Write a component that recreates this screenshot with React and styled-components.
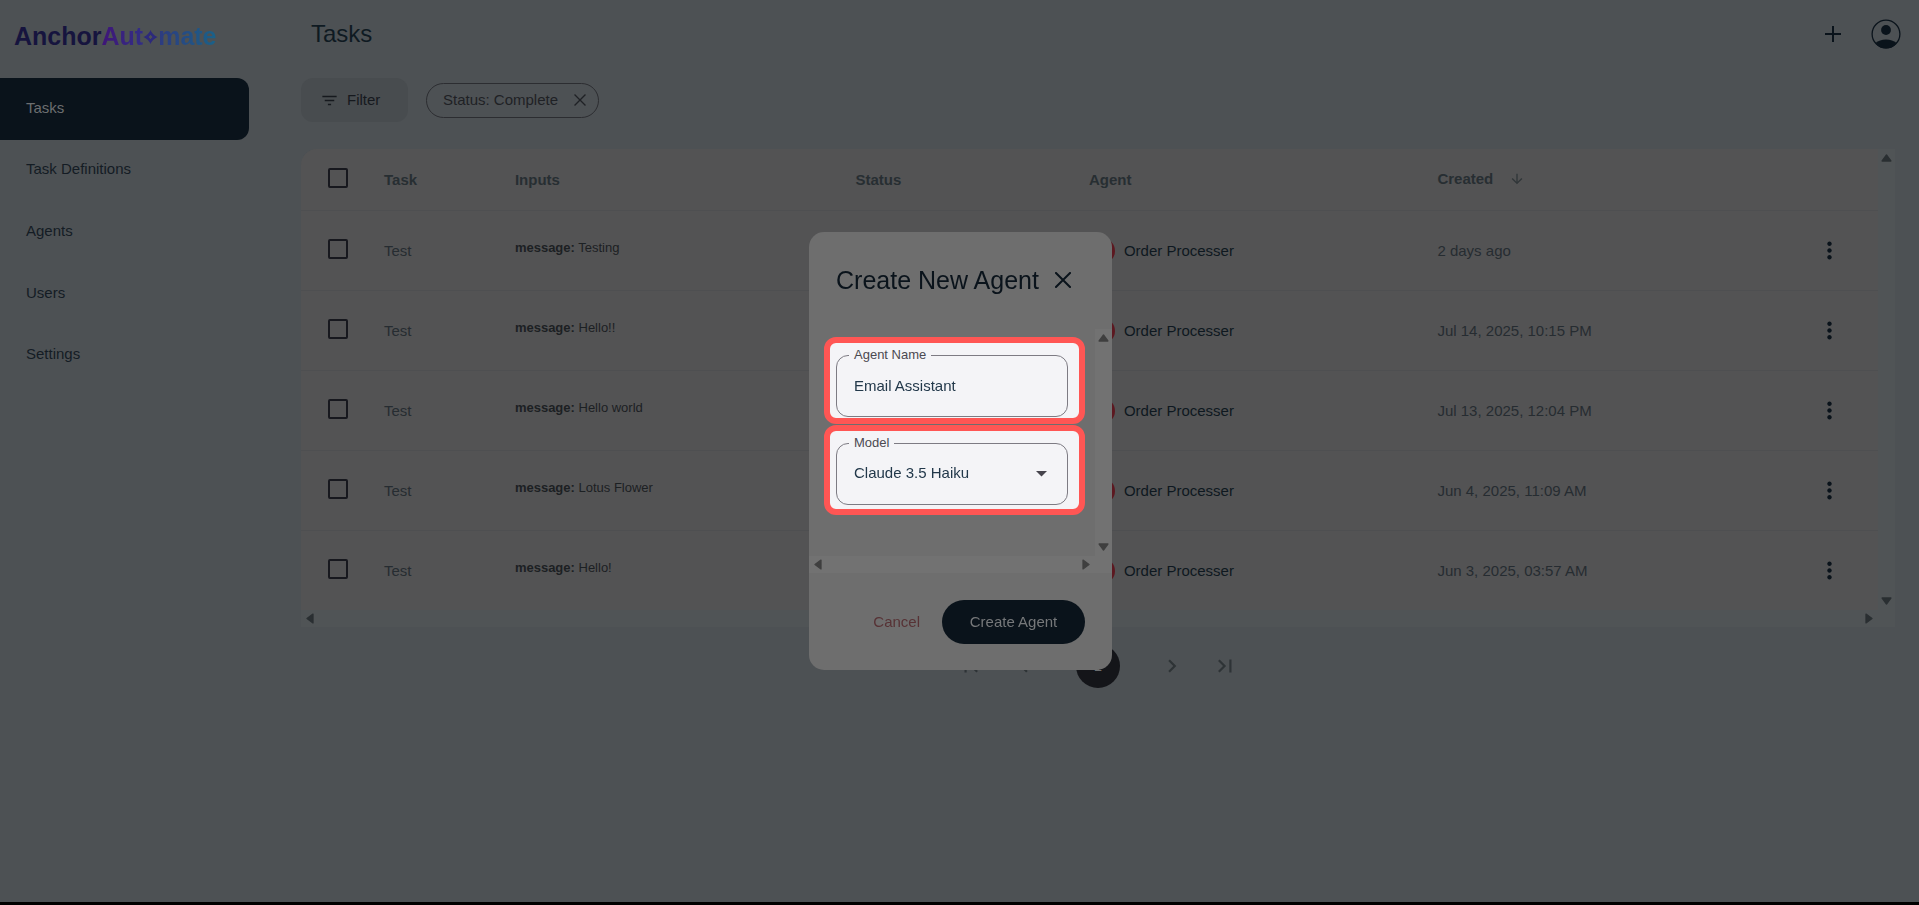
import React from "react";
import styled, { createGlobalStyle } from "styled-components";
import {
  MdArrowDownward,
  MdChevronLeft,
  MdChevronRight,
  MdFilterList,
  MdFirstPage,
  MdLastPage,
  MdMoreVert,
} from "react-icons/md";

const color = {
  page: "#4d5154",
  card: "#535354",
  track: "#505456",
  line: "#4e4f51",
  navy: "#0a131b",
  ink: "#16191e",
  text: "#262c31",
  heading: "#272e32",
  dialog: "#6e6e6e",
  dialogTrack: "#727272",
  highlight: "#ff5654",
  field: "#f4f4f7",
};

const GlobalStyle = createGlobalStyle`
  *, *::before, *::after { box-sizing: border-box; }
  body {
    margin: 0;
    background: ${color.page};
    color: ${color.text};
    font-family: "Liberation Sans", Arial, sans-serif;
    font-size: 15px;
    line-height: 20px;
  }
  button, input, select { font: inherit; color: inherit; }
  button { border: 0; padding: 0; background: none; cursor: pointer; }
  svg { display: block; flex: none; }
`;

const Shell = styled.div`
  display: flex;
  min-height: 100vh;
  border-bottom: 3px solid #000;
`;

const Sidebar = styled.aside`
  flex: none;
  width: 249px;
`;

const Logo = styled.a`
  display: flex;
  align-items: center;
  height: 78px;
  padding: 0 0 6px 14px;
  font-size: 25px;
  line-height: 30px;
  font-weight: 700;
  text-decoration: none;
  color: #16143e;
`;

const LogoPart = styled.span`
  background: linear-gradient(90deg, ${(p) => p.$from}, ${(p) => p.$to});
  background-clip: text;
  -webkit-background-clip: text;
  color: transparent;
`;

const NavList = styled.nav`
  display: flex;
  flex-direction: column;
  height: 308px;
`;

const NavLink = styled.a`
  flex: 1;
  display: flex;
  align-items: center;
  padding: 0 0 2px 26px;
  border-radius: 0 12px 12px 0;
  text-decoration: none;
  color: ${(p) => (p.$active ? "#6c6e70" : "#141c24")};
  background: ${(p) => (p.$active ? color.navy : "transparent")};
`;

const Main = styled.main`
  flex: 1;
  min-width: 0;
  padding: 0 24px 0 52px;
`;

const TopBar = styled.header`
  display: flex;
  align-items: center;
  height: 78px;
  margin-right: -6px;
  padding: 0 0 10px 10px;
`;

const PageTitle = styled.h1`
  flex: 1;
  margin: 0;
  font-size: 24px;
  line-height: 32px;
  font-weight: 400;
  color: #0f1a22;
`;

const TopActions = styled.div`
  display: flex;
  align-items: center;
  gap: 30px;
  color: ${color.navy};
`;

const IconButton = styled.button`
  display: flex;
  align-items: center;
  justify-content: center;
`;

const FilterBar = styled.div`
  display: flex;
  align-items: center;
  gap: 18px;
  margin-bottom: 27px;
`;

const FilterButton = styled.button`
  display: flex;
  align-items: center;
  gap: 8px;
  height: 44px;
  width: 107px;
  padding-left: 19px;
  border-radius: 12px;
  background: #484c4f;
  color: ${color.ink};
`;

const Chip = styled.span`
  display: flex;
  align-items: center;
  justify-content: space-between;
  height: 35px;
  width: 173px;
  padding: 0 12px 0 16px;
  border: 1px solid #2c2d31;
  border-radius: 18px;
  color: #1f2125;
`;

const TableCard = styled.section`
  display: grid;
  grid-template-columns: 1fr 17px;
  grid-template-rows: auto 17px;
  overflow: hidden;
  border-radius: 16px 0 0 0;
  background: ${color.track};
  color: #2a2f32;
`;

const Table = styled.table`
  width: 100%;
  table-layout: fixed;
  border-collapse: separate;
  border-spacing: 0;
  background: ${color.card};
`;

const Col = styled.col`
  width: ${(p) => p.$width};
`;

const HeadCell = styled.th`
  height: 62px;
  padding: 0 16px;
  border-bottom: 1px solid ${color.line};
  text-align: left;
  font-weight: 700;
  color: ${color.heading};
`;

const Cell = styled.td`
  height: ${(p) => (p.$last ? "79px" : "80px")};
  padding: 0 16px;
  border-bottom: ${(p) => (p.$last ? "0" : `1px solid ${color.line}`)};
  color: ${(p) => p.$tone || color.text};
`;

const Checkbox = styled.input`
  appearance: none;
  display: block;
  width: 20px;
  height: 20px;
  margin: 0 0 4px 11px;
  border: 2px solid #17181e;
  border-radius: 2px;
`;

const InputNote = styled.div`
  padding-bottom: 6px;
  font-size: 13px;
  color: #1c2023;
`;

const SortButton = styled.button`
  display: flex;
  align-items: center;
  gap: 16px;
  padding-bottom: 2px;
  font-weight: 700;
`;

const AgentName = styled.div`
  display: flex;
  align-items: center;
  gap: 9px;
`;

const Avatar = styled.span`
  width: 26px;
  height: 26px;
  border: 3px solid #5c1820;
  border-radius: 50%;
`;

const Track = styled.div`
  display: flex;
  flex-direction: ${(p) => (p.$vertical ? "column" : "row")};
  justify-content: space-between;
  align-items: center;
  padding: ${(p) => (p.$vertical ? "5px 0" : "0 5px")};
  background: ${(p) => p.$bg};
  color: ${(p) => p.$fg};
`;

const Pagination = styled.nav`
  display: flex;
  justify-content: center;
  align-items: center;
  gap: 27px;
  margin-top: 17px;
  color: #2e3336;
`;

const PageButton = styled(IconButton)`
  width: 26px;
  height: 26px;
`;

const CurrentPage = styled.button`
  width: 44px;
  height: 44px;
  margin: 0 12px;
  border-radius: 50%;
  background: #141519;
  color: #6c6e70;
`;

const Overlay = styled.div`
  position: fixed;
  inset: 0;
  display: flex;
  align-items: center;
  justify-content: center;
  padding: 0 0 3px 2px;
`;

const Dialog = styled.section`
  width: 303px;
  border-radius: 15px;
  overflow: hidden;
  background: ${color.dialog};
`;

const DialogHeader = styled.header`
  display: flex;
  align-items: center;
  justify-content: space-between;
  height: 97px;
  padding: 0 41px 2px 27px;
  color: ${color.navy};
`;

const DialogTitle = styled.h2`
  margin: 0;
  font-size: 25px;
  line-height: 32px;
  font-weight: 400;
  white-space: nowrap;
`;

const DialogBody = styled.div`
  display: grid;
  grid-template-columns: 1fr 17px;
  grid-template-rows: 227px 17px;
  background: ${color.dialogTrack};
`;

const Fields = styled.div`
  display: flex;
  flex-direction: column;
  gap: 1px;
  padding: 8px 10px 0 15px;
  background: ${color.dialog};
`;

const Highlight = styled.div`
  padding: 12px 11px ${(p) => p.$bottom} 6px;
  border: 6px solid ${color.highlight};
  border-radius: 12px;
  background: ${color.field};
`;

const Field = styled.div`
  position: relative;
  display: flex;
  align-items: center;
  height: 62px;
  border: 1px solid #7d7b83;
  border-radius: 12px;
  color: #22384a;
`;

const FieldLabel = styled.label`
  position: absolute;
  top: -11px;
  left: 12px;
  padding: 0 5px;
  font-size: 13px;
  background: ${color.field};
  color: #4b4951;
`;

const TextInput = styled.input`
  width: 100%;
  height: 100%;
  padding: 0 17px 2px;
  border: 0;
  outline: 0;
  background: none;
`;

const Select = styled.select`
  appearance: none;
  width: 100%;
  height: 100%;
  padding: 0 17px 2px;
  border: 0;
  outline: 0;
  background: none;
`;

const SelectArrow = styled.svg`
  position: absolute;
  right: 20px;
  color: #46444d;
  pointer-events: none;
`;

const DialogFooter = styled.footer`
  display: flex;
  align-items: center;
  justify-content: flex-end;
  gap: 22px;
  padding: 27px 27px 26px;
`;

const CancelButton = styled.button`
  height: 44px;
  color: #573235;
`;

const SubmitButton = styled.button`
  width: 143px;
  height: 44px;
  border-radius: 22px;
  background: ${color.navy};
  color: #76787a;
`;

const rotation = { up: 0, right: 90, down: 180, left: 270 };

function ScrollArrow({ dir }) {
  const sideways = dir === "left" || dir === "right";
  return (
    <svg width={sideways ? 8 : 11} height={sideways ? 11 : 8} viewBox={sideways ? "-4 -5.5 8 11" : "-5.5 -4 11 8"} aria-hidden="true">
      <path
        transform={`rotate(${rotation[dir]})`}
        d="M0-3L4.400 3H-4.400Z"
        fill="currentColor"
        stroke="currentColor"
        strokeWidth="1.300"
        strokeLinejoin="round"
      />
    </svg>
  );
}

function PlusIcon() {
  return (
    <svg width="16" height="16" viewBox="0 0 16 16" aria-hidden="true">
      <path d="M8 0V16M0 8H16" stroke="currentColor" strokeWidth="2" />
    </svg>
  );
}

function CrossIcon({ size, weight }) {
  return (
    <svg width={size} height={size} viewBox={`0 0 ${size} ${size}`} aria-hidden="true">
      <path
        d={`M1 1L${size - 1} ${size - 1}M${size - 1} 1L1 ${size - 1}`}
        stroke="currentColor"
        strokeWidth={weight}
        strokeLinecap="square"
      />
    </svg>
  );
}

function AccountIcon() {
  return (
    <svg width="30" height="30" viewBox="0 0 30 30" aria-hidden="true">
      <clipPath id="account-ring"><circle cx="15" cy="15" r="14.5" /></clipPath>
      <circle cx="15" cy="15" r="13.9" fill="none" stroke="currentColor" strokeWidth="1.3" />
      <circle cx="15" cy="11" r="4.9" fill="currentColor" />
      <path d="M4.5 24Q8.500 20.500 15 20.500T25.500 24L22 30H8Z" fill="currentColor" clipPath="url(#account-ring)" />
    </svg>
  );
}

function LogoStar() {
  return (
    <svg width="15" height="16" viewBox="0 0 15 16" aria-hidden="true">
      <path
        fillRule="evenodd"
        fill="#2d2a7c"
        d="M7.500 2Q9 6.500 14.500 9Q9 11.500 7.500 16Q6 11.500 .5 9Q6 6.500 7.500 2ZM7.500 6.600L5.100 9L7.500 11.400L9.900 9Z"
      />
      <path d="M7.500 5.400L11.100 9L7.500 12.600L3.900 9Z" fill="none" stroke="#2d2a7c" strokeWidth="2" />
    </svg>
  );
}

const navItems = ["Tasks", "Task Definitions", "Agents", "Users", "Settings"];

const rows = [
  { message: "Testing", created: "2 days ago" },
  { message: "Hello!!", created: "Jul 14, 2025, 10:15 PM" },
  { message: "Hello world", created: "Jul 13, 2025, 12:04 PM" },
  { message: "Lotus Flower", created: "Jun 4, 2025, 11:09 AM" },
  { message: "Hello!", created: "Jun 3, 2025, 03:57 AM" },
];

function TaskTable() {
  return (
    <TableCard>
      <Table>
        <colgroup>
          <Col $width="67px" />
          <Col $width="8.3%" />
          <Col $width="21.6%" />
          <Col $width="14.8%" />
          <Col $width="22.1%" />
          <Col />
          <Col $width="78px" />
        </colgroup>
        <thead>
          <tr>
            <HeadCell as="td">
              <Checkbox type="checkbox" aria-label="Select all tasks" />
            </HeadCell>
            <HeadCell>Task</HeadCell>
            <HeadCell>Inputs</HeadCell>
            <HeadCell>Status</HeadCell>
            <HeadCell>Agent</HeadCell>
            <HeadCell>
              <SortButton type="button">
                Created <MdArrowDownward size={16} color="#303639" />
              </SortButton>
            </HeadCell>
            <HeadCell as="td" />
          </tr>
        </thead>
        <tbody>
          {rows.map((row, i) => {
            const last = i === rows.length - 1;
            return (
              <tr key={row.created}>
                <Cell $last={last}>
                  <Checkbox type="checkbox" aria-label={`Select task ${i + 1}`} />
                </Cell>
                <Cell $last={last}>Test</Cell>
                <Cell $last={last}>
                  <InputNote>
                    <b>message:</b> {row.message}
                  </InputNote>
                </Cell>
                <Cell $last={last} />
                <Cell $last={last} $tone="#0e1820">
                  <AgentName>
                    <Avatar />
                    Order Processer
                  </AgentName>
                </Cell>
                <Cell $last={last}>{row.created}</Cell>
                <Cell $last={last} $tone={color.navy}>
                  <IconButton type="button" aria-label="Task actions">
                    <MdMoreVert size={27} />
                  </IconButton>
                </Cell>
              </tr>
            );
          })}
        </tbody>
      </Table>
      <Track $vertical $bg={color.track} $fg="#2a2f32">
        <ScrollArrow dir="up" />
        <ScrollArrow dir="down" />
      </Track>
      <Track $bg={color.track} $fg="#2a2f32">
        <ScrollArrow dir="left" />
        <ScrollArrow dir="right" />
      </Track>
    </TableCard>
  );
}

function CreateAgentDialog() {
  return (
    <Overlay>
      <Dialog role="dialog" aria-modal="true" aria-labelledby="dialog-title">
        <DialogHeader>
          <DialogTitle id="dialog-title">Create New Agent</DialogTitle>
          <IconButton type="button" aria-label="Close">
            <CrossIcon size={16} weight={2} />
          </IconButton>
        </DialogHeader>
        <DialogBody>
          <Fields>
            <Highlight $bottom="1px">
              <Field>
                <FieldLabel htmlFor="agent-name">Agent Name</FieldLabel>
                <TextInput id="agent-name" type="text" defaultValue="Email Assistant" />
              </Field>
            </Highlight>
            <Highlight $bottom="4px">
              <Field>
                <FieldLabel htmlFor="agent-model">Model</FieldLabel>
                <Select id="agent-model" defaultValue="haiku">
                  <option value="haiku">Claude 3.5 Haiku</option>
                </Select>
                <SelectArrow width="11" height="6" viewBox="0 0 11 6" aria-hidden="true">
                  <path d="M0 0H11L5.500 5.500Z" fill="currentColor" />
                </SelectArrow>
              </Field>
            </Highlight>
          </Fields>
          <Track $vertical $bg={color.dialogTrack} $fg="#3f3f3f">
            <ScrollArrow dir="up" />
            <ScrollArrow dir="down" />
          </Track>
          <Track $bg={color.dialogTrack} $fg="#3f3f3f">
            <ScrollArrow dir="left" />
            <ScrollArrow dir="right" />
          </Track>
        </DialogBody>
        <DialogFooter>
          <CancelButton type="button">Cancel</CancelButton>
          <SubmitButton type="button">Create Agent</SubmitButton>
        </DialogFooter>
      </Dialog>
    </Overlay>
  );
}

export default function App() {
  return (
    <>
      <GlobalStyle />
      <Shell>
        <Sidebar>
          <Logo href="#" aria-label="AnchorAutomate">
            <span>Anchor</span>
            <LogoPart $from="#3f1577" $to="#322e86">Aut</LogoPart>
            <LogoStar />
            <LogoPart $from="#2e3a80" $to="#1a6288">mate</LogoPart>
          </Logo>
          <NavList>
            {navItems.map((item, i) => (
              <NavLink key={item} href="#" $active={i === 0}>
                {item}
              </NavLink>
            ))}
          </NavList>
        </Sidebar>
        <Main>
          <TopBar>
            <PageTitle>Tasks</PageTitle>
            <TopActions>
              <IconButton type="button" aria-label="Add">
                <PlusIcon />
              </IconButton>
              <IconButton type="button" aria-label="Account">
                <AccountIcon />
              </IconButton>
            </TopActions>
          </TopBar>
          <FilterBar>
            <FilterButton type="button">
              <MdFilterList size={19} />
              Filter
            </FilterButton>
            <Chip>
              Status: Complete
              <IconButton type="button" aria-label="Remove filter">
                <CrossIcon size={12} weight={1.3} />
              </IconButton>
            </Chip>
          </FilterBar>
          <TaskTable />
          <Pagination aria-label="Pages">
            <PageButton type="button" aria-label="First page"><MdFirstPage size={26} /></PageButton>
            <PageButton type="button" aria-label="Previous page"><MdChevronLeft size={26} /></PageButton>
            <CurrentPage type="button">1</CurrentPage>
            <PageButton type="button" aria-label="Next page"><MdChevronRight size={26} /></PageButton>
            <PageButton type="button" aria-label="Last page"><MdLastPage size={26} /></PageButton>
          </Pagination>
        </Main>
      </Shell>
      <CreateAgentDialog />
    </>
  );
}
